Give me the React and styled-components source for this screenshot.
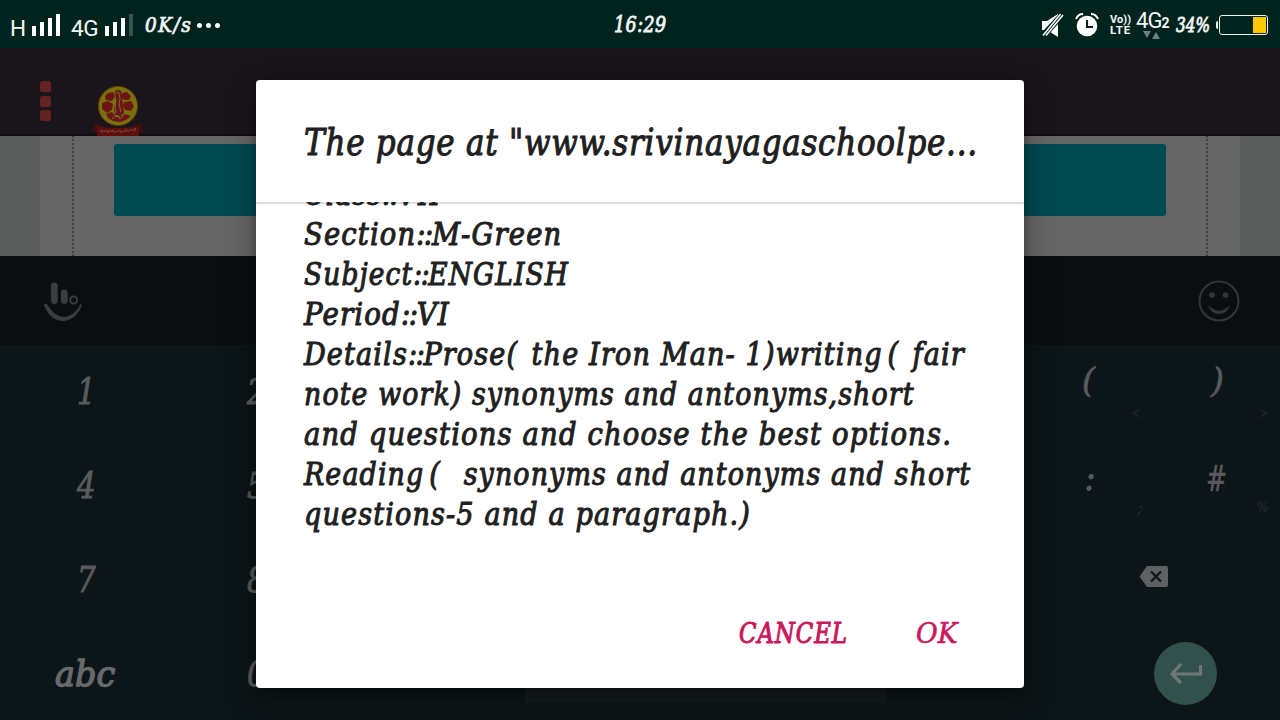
import React, { useLayoutEffect, useRef } from 'react';
import styled, { createGlobalStyle } from 'styled-components';

const GlobalStyle = createGlobalStyle`
  * { box-sizing: border-box; }
  body { margin: 0; background: #0c1517; overflow: hidden; }
`;

const serif = '"DejaVu Serif Condensed", "DejaVu Serif", serif';

const Screen = styled.main`
  position: relative;
  width: 1280px;
  height: 720px;
  overflow: hidden;
  display: flex;
  flex-direction: column;
  background: #0c1517;
`;

/* ---------- text set to an exact measure ---------- */
const FitBox = styled.span`
  display: block;
  flex: none;
  width: ${(p) => p.$width}px;
  height: ${(p) => p.$line}px;
  margin-left: ${(p) => p.$gap || 0}px;
  font: italic 400 ${(p) => p.$size}px/${(p) => p.$line}px ${serif};
  color: ${(p) => p.$color || 'inherit'};
  letter-spacing: ${(p) => p.$track || 0}px;
  -webkit-text-stroke: ${(p) => p.$stroke || 0}px currentColor;
  white-space: pre;
`;

const FitInner = styled.span`
  display: inline-block;
  transform-origin: 0 50%;
`;

const Tracked = styled.span`
  letter-spacing: ${(p) => p.$by}px;
`;

function Fit({ children, width, size, line, gap, color, stroke, track }) {
  const ref = useRef(null);
  useLayoutEffect(() => {
    const el = ref.current;
    el.style.transform = `scaleX(${width / el.offsetWidth})`;
  }, [width, size, children]);
  return (
    <FitBox $width={width} $size={size} $line={line} $gap={gap} $color={color} $stroke={stroke} $track={track}>
      <FitInner ref={ref}>{children}</FitInner>
    </FitBox>
  );
}

/* ---------- status bar ---------- */
const StatusBar = styled.header`
  flex: none;
  height: 48px;
  display: grid;
  grid-template-columns: 614px 52px 614px;
  background: #00241d;
  color: #f4f8f7;
`;

const StatusGroup = styled.div`
  display: flex;
  align-items: center;
  justify-content: ${(p) => (p.$end ? 'flex-end' : 'flex-start')};
  padding: 0 12px 0 ${(p) => (p.$end ? 0 : 10)}px;
`;

const Network = styled.span`
  width: ${(p) => p.$width}px;
  margin-left: ${(p) => p.$gap || 0}px;
  padding-top: 6px;
  font: 400 22.5px/24px Roboto, sans-serif;
  letter-spacing: -0.5px;
`;

const Bars = styled.div`
  display: flex;
  align-items: flex-end;
  gap: 4px;
  height: 22px;
  margin-left: ${(p) => p.$gap}px;
`;

const Bar = styled.i`
  width: 4px;
  height: ${(p) => p.$height}px;
  background: ${(p) => (p.$dim ? '#36544e' : '#fff')};
`;

const Dots = styled.div`
  display: flex;
  gap: 4px;
  margin-left: 5px;
  padding-top: 1px;
`;

const Dot = styled.i`
  width: 5px;
  height: 5px;
  border-radius: 50%;
  background: #fff;
`;

const StatusIcon = styled.svg`
  flex: none;
  display: block;
  margin-left: ${(p) => p.$gap || 0}px;
`;

const Volte = styled.div`
  width: 22px;
  margin-left: 11px;
  padding-top: 1px;
  white-space: nowrap;
`;

const VolteLine = styled.div`
  font: 700 ${(p) => p.$size}px/11.5px Roboto, sans-serif;
  letter-spacing: ${(p) => p.$track}px;
`;

const DataSlot = styled.div`
  width: 34px;
  height: 28px;
  margin-left: 4px;
  display: flex;
  flex-direction: column;
`;

const DataLabel = styled.div`
  display: flex;
  align-items: baseline;
  height: 20px;
  font: 400 22px/20px Roboto, sans-serif;
  letter-spacing: -0.9px;
  white-space: nowrap;
`;

const SlotNumber = styled.b`
  font-size: 14px;
  font-weight: 700;
`;

const Battery = styled.div`
  position: relative;
  width: 49px;
  height: 20px;
  margin-left: 9px;
  padding: 1px;
  display: flex;
  justify-content: flex-end;
  border: 1px solid #e8f3f0;
  border-radius: 3px;

  &::before {
    content: '';
    position: absolute;
    left: -4px;
    top: 5px;
    width: 2px;
    height: 8px;
    border-radius: 2px 0 0 2px;
    background: #e8f3f0;
  }
`;

const Charge = styled.i`
  width: 13px;
  background: #ffc800;
`;

/* ---------- web page ---------- */
const AppBar = styled.div`
  flex: none;
  height: 88px;
  padding: 33px 0 0 40px;
  display: flex;
  align-items: flex-start;
  background: #19151b;
  border-bottom: 2px solid #100c12;
`;

const MenuDots = styled.div`
  display: flex;
  flex-direction: column;
  gap: 3.5px;
  width: 11px;
`;

const MenuDot = styled.i`
  height: 11px;
  border-radius: 2.5px;
  background: #642321;
`;

const Logo = styled.svg`
  display: block;
  margin: 3px 0 0 41px;
`;

const Page = styled.section`
  flex: none;
  height: 120px;
  padding: 0 40px;
  background: #5b5e5d;
`;

const Sheet = styled.div`
  height: 100%;
  padding: 0 32px;
  background: #666;
`;

const Panel = styled.div`
  height: 100%;
  padding: 8px 40px 0;
  border: 2px dotted #424242;
  border-width: 0 2px;
`;

const Banner = styled.div`
  height: 72px;
  border-radius: 3px;
  background: #004a52;
`;

/* ---------- keyboard ---------- */
const Toolbar = styled.div`
  flex: none;
  height: 90px;
  padding: 0 40px 0 43px;
  display: flex;
  align-items: center;
  justify-content: space-between;
  background: #0a0e0f;
  border-bottom: 1px solid #0e1819;
`;

const Keyboard = styled.section`
  flex: 1;
  display: flex;
  color: #595c5d;
`;

const NumberPad = styled.div`
  width: 1024px;
  display: grid;
  grid-template-rows: repeat(4, 94px);
`;

const KeyRow = styled.div`
  display: flex;
`;

const Key = styled.div`
  width: ${(p) => p.$width || 170}px;
  display: flex;
  justify-content: center;
`;

const SpaceKey = styled.div`
  width: 361px;
  height: 59px;
  margin: 16px 0 0 185px;
  background: #141a1b;
`;

const SidePad = styled.div`
  width: 256px;
  display: grid;
  grid-template-columns: 128px 128px;
  grid-template-rows: 94px 94px 94px 92px;
`;

const SymbolKey = styled.div`
  display: flex;
  flex-direction: column;
  align-items: center;
  padding-top: ${(p) => p.$top}px;
`;

const Hint = styled.div`
  align-self: flex-end;
  margin: ${(p) => p.$top}px ${(p) => p.$right}px 0 0;
`;

const WideKey = styled.div`
  grid-column: span 2;
  display: flex;
  align-items: flex-start;
  padding: ${(p) => p.$top}px 0 0 ${(p) => p.$left}px;
`;

const EnterKey = styled.div`
  width: 63px;
  height: 63px;
  display: flex;
  align-items: center;
  justify-content: center;
  border-radius: 50%;
  background: #31524c;
`;

/* ---------- dialog ---------- */
const Overlay = styled.div`
  position: absolute;
  inset: 0;
  padding-top: 80px;
  display: flex;
  align-items: flex-start;
  justify-content: center;
`;

const Dialog = styled.section`
  width: 768px;
  height: 608px;
  display: flex;
  flex-direction: column;
  overflow: hidden;
  border-radius: 4px;
  background: #fff;
  color: #202020;
  box-shadow: 0 10px 32px rgba(0, 0, 0, 0.34), 0 1px 8px rgba(0, 0, 0, 0.22);
`;

const DialogTitle = styled.div`
  flex: none;
  height: 122px;
  padding: 38px 48px 0;
`;

const Message = styled.div`
  flex: none;
  height: 370px;
  overflow: hidden;
  padding: 0 48px;
  background: linear-gradient(#dedfde, #dedfde) 0 0 / 100% 2px no-repeat;
`;

const Lines = styled.div`
  margin-top: -28px;
`;

const Actions = styled.footer`
  display: flex;
  justify-content: flex-end;
  gap: 68px;
  padding: 41px 67px 0 0;
  color: #c9195b;
`;

const message = [
  ['Class::VII', 137],
  ['Section::M-Green', 258],
  ['Subject::ENGLISH', 265],
  ['Period::VI', 146],
  ['Details::Prose( the Iron Man- 1)writing ( fair', 661],
  ['note work) synonyms and antonyms,short', 611],
  ['and questions and choose the best options.', 648],
  ['Reading (  synonyms and antonyms and short', 667],
  ['questions-5 and a paragraph.)', 447],
];

const digits = [
  ['1', '2'],
  ['4', '5'],
  ['7', '8'],
];

/* letter-spacing of colons, of the blank before a bracket and of an opening bracket */
const tracking = { '::': -1.5, ' ': -4, '(': 5 };

function MessageText({ text }) {
  return text.split(/(::| (?=\()|\()/).map((part, i) => (
    part in tracking ? <Tracked key={i} $by={tracking[part]}>{part}</Tracked> : part
  ));
}

function SchoolLogo() {
  return (
    <Logo width="52" height="52" viewBox="0 0 52 52">
      <circle cx="26" cy="22" r="19.6" fill="#77720b" stroke="#69350d" strokeWidth="1" />
      <g fill="#6c1514">
        <path d="M16 9l5-1 2 4-3 5-6-1-1-4zM30 9l5-1 4 4-2 4-5 0-3-3z" />
        <path d="M10 19l6-2 5 3-1 6-5 3-5-4zM32 18l7-1 3 5-3 5-6-1-2-4z" />
        <path d="M23 7q3-2 6 0l1 6 1 8 1 8-4 3-5-1-1-6 2-8z" />
        <path d="M14 30l6-2 4 5 3 0 6-3 6 2-5 4-6 2-7-1-5-3z" />
      </g>
      <path d="M24 9q2-2 3 0l1 6-1 5 2 8M24 15l-1 8 1 6M20 35l5-4 3 4 4-4" fill="none" stroke="#817039" strokeWidth=".9" />
      <path d="M1 40h6v8H0l3-4zM51 40h-6v8h7l-3-4z" fill="#480b0b" />
      <path d="M5 42q21 4 42 0v10H5z" fill="#5f0e0d" />
      <path d="M8 47.500l1-1.500 1 2.500 2-2.500 1 2 2-2 1 3 2-3 2 2 1-2 2 3 2-2 1 1 2-2 1 3 2-2 2 1 1-3 2 3 2-2 1-1 2 2 2-3 1 3" fill="none" stroke="#785552" strokeWidth=".8" />
    </Logo>
  );
}

function Status() {
  return (
    <StatusBar>
      <StatusGroup>
        <Network $width={22}>H</Network>
        <Bars>
          {[10, 14, 18, 22].map((h) => <Bar key={h} $height={h} />)}
        </Bars>
        <Network $width={26} $gap={11}>4G</Network>
        <Bars $gap={8}>
          {[10, 14, 18, 22].map((h) => <Bar key={h} $height={h} $dim={h === 22} />)}
        </Bars>
        <Fit width={47} size={21} line={48} gap={12} stroke={0.7} track={1.5}>0K/s</Fit>
        <Dots><Dot /><Dot /><Dot /></Dots>
      </StatusGroup>
      <Fit width={53} size={22} line={49} stroke={0.8} track={0.5}>16:29</Fit>
      <StatusGroup $end>
        <StatusIcon width="23" height="24" viewBox="0 0 23 24">
          <path d="M1 8h5l11-7v23L6 17H1z" fill="#fff" />
          <path d="M.5 22L20 1M4 23L23 2" stroke="#00241d" strokeWidth="3.2" />
          <path d="M2 22.5L19.5 1M5 22.5L22 2" stroke="#fff" strokeWidth="1.5" />
        </StatusIcon>
        <StatusIcon $gap={11} width="24" height="24" viewBox="0 0 24 24">
          <circle cx="12" cy="13" r="10.3" fill="#fff" />
          <path d="M12 7v7h6" fill="none" stroke="#00241d" strokeWidth="2" />
          <path d="M1 6Q3 1 8 1M23 6Q21 1 16 1" fill="none" stroke="#fff" strokeWidth="2" />
        </StatusIcon>
        <Volte>
          <VolteLine $size={11} $track={0.1}>Vo))</VolteLine>
          <VolteLine $size={11.5} $track={0.9}>LTE</VolteLine>
        </Volte>
        <DataSlot>
          <DataLabel>4G<SlotNumber>2</SlotNumber></DataLabel>
          <StatusIcon $gap={7} width="18" height="8" viewBox="0 0 18 8">
            <path d="M0 0h8L4 7zM9 8h8L13 1z" fill="#6d827e" />
          </StatusIcon>
        </DataSlot>
        <Fit width={34} size={21} line={48} gap={6} stroke={0.8}>34%</Fit>
        <Battery><Charge /></Battery>
      </StatusGroup>
    </StatusBar>
  );
}

export default function App() {
  return (
    <Screen>
      <GlobalStyle />
      <Status />
      <AppBar>
        <MenuDots><MenuDot /><MenuDot /><MenuDot /></MenuDots>
        <SchoolLogo />
      </AppBar>
      <Page>
        <Sheet><Panel><Banner /></Panel></Sheet>
      </Page>
      <Toolbar>
        <svg width="40" height="40" viewBox="0 0 40 40" fill="none" stroke="#3a3d3e" strokeLinecap="round">
          <path d="M11.3 5v14.5M21.3 12v7.5" strokeWidth="6.8" />
          <circle cx="30.7" cy="19" r="3.5" strokeWidth="1.9" />
          <path d="M.8 24Q2 22 4.2 23.5Q12 36 21 36Q32 35 37.5 23L38.8 24Q33 40 19 40Q7 39 .8 24z" fill="#3a3d3e" stroke="none" />
        </svg>
        <svg width="42" height="42" viewBox="0 0 42 42" fill="none" stroke="#343738">
          <circle cx="21" cy="21" r="19.5" strokeWidth="2" />
          <circle cx="14" cy="15" r="2.8" fill="#343738" stroke="none" />
          <circle cx="27.5" cy="15" r="2.8" fill="#343738" stroke="none" />
          <path d="M10 25Q21 36 32 25Q29 34 21 34Q13 34 10 25z" fill="#343738" stroke="none" />
        </svg>
      </Toolbar>
      <Keyboard>
        <NumberPad>
          {digits.map((row) => (
            <KeyRow key={row[0]}>
              {row.map((d) => (
                <Key key={d}><Fit width={19} size={36} line={91} gap={2} stroke={0.9}>{d}</Fit></Key>
              ))}
            </KeyRow>
          ))}
          <KeyRow>
            <Key><Fit width={60} size={36} line={92} stroke={1.3} color="#686a6b">abc</Fit></Key>
            <Key><Fit width={19} size={36} line={91} gap={2} stroke={0.9}>0</Fit></Key>
            <SpaceKey />
            <Key $width={196}><Fit width={9} size={36} line={94} stroke={0.5}>.</Fit></Key>
          </KeyRow>
        </NumberPad>
        <SidePad>
          <SymbolKey $top={12}>
            <Fit width={13} size={34} line={44} stroke={0.6}>(</Fit>
            <Hint $top={1} $right={11}><Fit width={10} size={14} line={20} color="#25292b">{'<'}</Fit></Hint>
          </SymbolKey>
          <SymbolKey $top={12}>
            <Fit width={13} size={34} line={44} gap={3} stroke={0.6}>)</Fit>
            <Hint $top={1} $right={11}><Fit width={10} size={14} line={20} color="#25292b">{'>'}</Fit></Hint>
          </SymbolKey>
          <SymbolKey $top={16}>
            <Fit width={11} size={36} line={44} gap={4} stroke={0.8}>:</Fit>
            <Hint $top={-3} $right={9}><Fit width={6} size={17} line={20} color="#25292b">;</Fit></Hint>
          </SymbolKey>
          <SymbolKey $top={17}>
            <Fit width={21} size={36} line={44} stroke={0.5}>#</Fit>
            <Hint $top={-4} $right={11}><Fit width={12} size={15} line={20} color="#292d2f">%</Fit></Hint>
          </SymbolKey>
          <WideKey $top={32} $left={115}>
            <svg width="30" height="22" viewBox="0 0 30 22">
              <path d="M8 0h19q2 0 2 2v17q0 2-2 2H8L.5 10.5z" fill="#5e6162" />
              <path d="M12 5.500l10 10M22 5.500L12 15.500" stroke="#0c1517" strokeWidth="2.2" />
            </svg>
          </WideKey>
          <WideKey $top={14} $left={130}>
            <EnterKey>
              <svg width="34" height="22" viewBox="0 0 34 22">
                <path d="M31.500 2v9H3M12 1L3 11l9 9" fill="none" stroke="#707676" strokeWidth="3.2" />
              </svg>
            </EnterKey>
          </WideKey>
        </SidePad>
      </Keyboard>
      <Overlay>
        <Dialog>
          <DialogTitle>
            <Fit width={674} size={36.5} line={50} stroke={1} track={0.8}>{'The page at "www.srivinayagaschoolpe...'}</Fit>
          </DialogTitle>
          <Message>
            <Lines>
              {message.map(([text, width]) => (
                <Fit key={text} width={width} size={32} line={40} stroke={1} track={1.2}>
                  <MessageText text={text} />
                </Fit>
              ))}
            </Lines>
          </Message>
          <Actions>
            <Fit width={109} size={28} line={41} stroke={1} track={1}>CANCEL</Fit>
            <Fit width={41} size={28} line={41} stroke={0.6}>OK</Fit>
          </Actions>
        </Dialog>
      </Overlay>
    </Screen>
  );
}
